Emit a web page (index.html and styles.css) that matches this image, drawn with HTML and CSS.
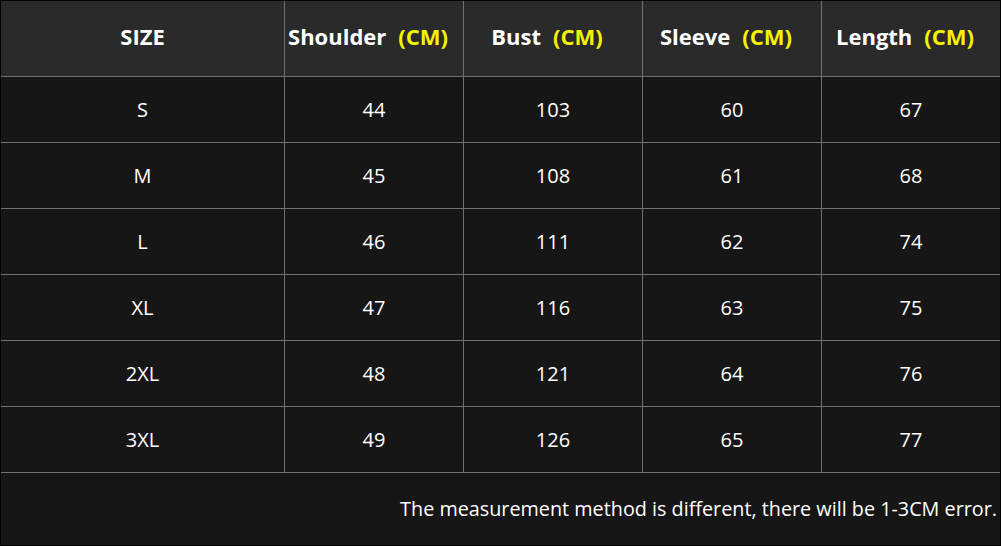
FILE: index.html
```html
<!DOCTYPE html>
<html>
<head>
<meta charset="utf-8">
<link rel="stylesheet" href="styles.css">
</head>
<body>
<div class="chart">
  <div class="cell head">SIZE</div>
  <div class="cell head measure">Shoulder<span class="unit">(CM)</span></div>
  <div class="cell head measure">Bust<span class="unit">(CM)</span></div>
  <div class="cell head measure">Sleeve<span class="unit">(CM)</span></div>
  <div class="cell head measure">Length<span class="unit">(CM)</span></div>

  <div class="cell">S</div><div class="cell">44</div><div class="cell">103</div><div class="cell">60</div><div class="cell">67</div>
  <div class="cell">M</div><div class="cell">45</div><div class="cell">108</div><div class="cell">61</div><div class="cell">68</div>
  <div class="cell">L</div><div class="cell">46</div><div class="cell">111</div><div class="cell">62</div><div class="cell">74</div>
  <div class="cell">XL</div><div class="cell">47</div><div class="cell">116</div><div class="cell">63</div><div class="cell">75</div>
  <div class="cell">2XL</div><div class="cell">48</div><div class="cell">121</div><div class="cell">64</div><div class="cell">76</div>
  <div class="cell">3XL</div><div class="cell">49</div><div class="cell">126</div><div class="cell">65</div><div class="cell">77</div>

  <div class="cell note">The measurement method is different, there will be 1-3CM error.</div>
</div>
</body>
</html>
```

FILE: styles.css
```css
html, body {
  margin: 0;
  padding: 0;
  background: #000;
}

.chart {
  width: 999px;
  border: 1px solid #000;
  display: grid;
  grid-template-columns: 283px repeat(4, 178px);
  grid-template-rows: 75px repeat(6, 65px) 72px;
  gap: 1px;
  background: #707070;
  font-family: "Open Sans", "Noto Sans", sans-serif;
  color: #fff;
}

.cell {
  background: #161616;
  display: flex;
  align-items: center;
  justify-content: center;
  font-size: 20px;
  padding-bottom: 1px;
}

.head {
  background: #2a2a2a;
  font-weight: 700;
  font-size: 22px;
  padding-bottom: 6px;
}

.measure {
  padding-right: 12px;
}

.unit {
  color: #f6f200;
  margin-left: 12px;
}

.note {
  grid-column: 1 / -1;
  justify-content: flex-end;
  padding-right: 3px;
  font-size: 19.8px;
}
```
